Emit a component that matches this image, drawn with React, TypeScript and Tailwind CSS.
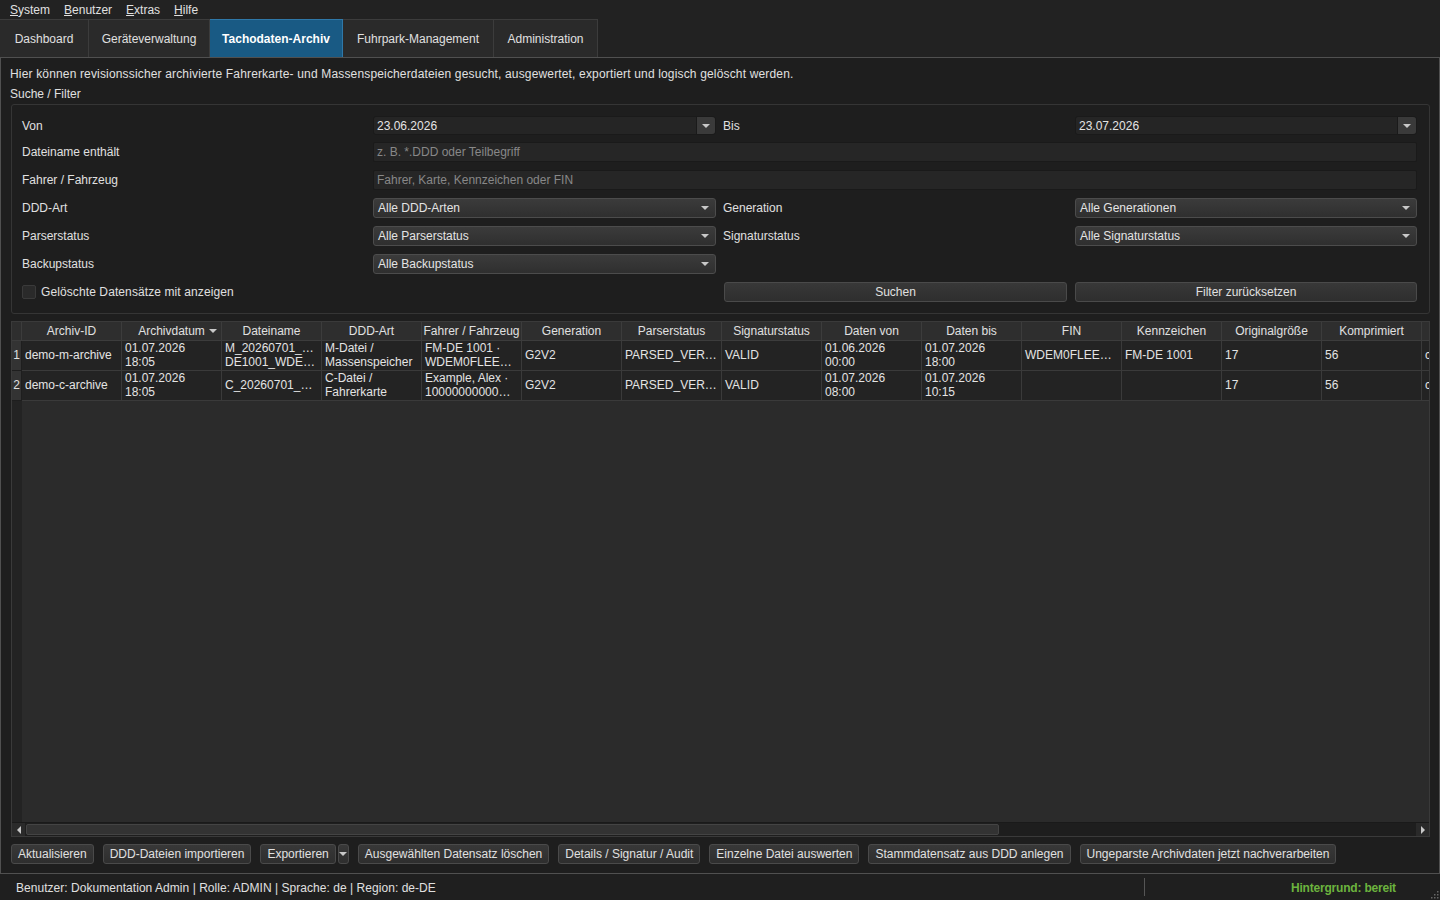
import type { ReactNode } from 'react';

const font = "font-['Liberation_Sans',Arial,sans-serif]";

const tabs = [
  { label: 'Dashboard', w: 'w-[89px]' },
  { label: 'Geräteverwaltung', w: 'w-[121px]' },
  { label: 'Tachodaten-Archiv', w: 'w-[133px]', active: true },
  { label: 'Fuhrpark-Management', w: 'w-[151px]' },
  { label: 'Administration', w: 'w-[104px]' },
];

const columns = [
  'Archiv-ID',
  'Archivdatum',
  'Dateiname',
  'DDD-Art',
  'Fahrer / Fahrzeug',
  'Generation',
  'Parserstatus',
  'Signaturstatus',
  'Daten von',
  'Daten bis',
  'FIN',
  'Kennzeichen',
  'Originalgröße',
  'Komprimiert',
  '',
];

const rows: string[][] = [
  [
    'demo-m-archive',
    '01.07.2026\n18:05',
    'M_20260701_…\nDE1001_WDE…',
    'M-Datei /\nMassenspeicher',
    'FM-DE 1001 ·\nWDEM0FLEE…',
    'G2V2',
    'PARSED_VER…',
    'VALID',
    '01.06.2026\n00:00',
    '01.07.2026\n18:00',
    'WDEM0FLEE…',
    'FM-DE 1001',
    '17',
    '56',
    'c…',
  ],
  [
    'demo-c-archive',
    '01.07.2026\n18:05',
    'C_20260701_…',
    'C-Datei /\nFahrerkarte',
    'Example, Alex ·\n10000000000…',
    'G2V2',
    'PARSED_VER…',
    'VALID',
    '01.07.2026\n08:00',
    '01.07.2026\n10:15',
    '',
    '',
    '17',
    '56',
    'c…',
  ],
];

const actions = [
  'Aktualisieren',
  'DDD-Dateien importieren',
  'Exportieren',
  'Ausgewählten Datensatz löschen',
  'Details / Signatur / Audit',
  'Einzelne Datei auswerten',
  'Stammdatensatz aus DDD anlegen',
  'Ungeparste Archivdaten jetzt nachverarbeiten',
];

function Arrow({ className = '' }: { className?: string }) {
  return (
    <svg viewBox="0 0 8 4" className={`h-[4px] w-[8px] ${className}`}>
      <path d="M0 0h8L4 4z" fill="#c8c8c8" />
    </svg>
  );
}

function Combo({ value }: { value: string }) {
  return (
    <div className="flex h-[20px] items-center justify-between rounded-[3px] border border-[#4c4c4c] bg-gradient-to-b from-[#3b3b3b] to-[#2f2f2f] pl-[4px] pr-[6px] text-[#e4e4e4]">
      <span>{value}</span>
      <Arrow />
    </div>
  );
}

function DateField({ value }: { value: string }) {
  return (
    <div className="flex h-[19px] items-stretch rounded-[3px] border border-[#1a1a1a] bg-[#252525]">
      <span className="flex flex-1 items-center pl-[3px] text-[#e4e4e4]">{value}</span>
      <span className="flex w-[19px] items-center justify-center rounded-r-[3px] border-l border-[#1a1a1a] bg-[#3a3a3a]">
        <Arrow />
      </span>
    </div>
  );
}

function TextField({ placeholder }: { placeholder: string }) {
  return (
    <div className="col-span-3 flex h-[20px] items-center rounded-[2px] border border-[#1a1a1a] bg-[#262626] pl-[3px] text-[#888]">
      {placeholder}
    </div>
  );
}

function Btn({ children, className = '' }: { children: ReactNode; className?: string }) {
  return (
    <button className={`h-[20px] rounded-[3px] border border-[#4a4a4a] bg-gradient-to-b from-[#383838] to-[#2e2e2e] px-[6px] text-[#e0e0e0] ${className}`}>
      {children}
    </button>
  );
}

function Label({ children }: { children: ReactNode }) {
  return <span className="flex items-center text-[#e0e0e0]">{children}</span>;
}

function FilterBox() {
  const grid = 'grid grid-cols-[344px_343px_345px_342px] gap-x-[7px]';
  return (
    <div className="mt-[2px] flex flex-col gap-[8px] rounded-[3px] border border-[#353535] px-[10px] pb-[11px] pt-[11px]">
      <div className={`${grid} -mb-[1px] h-[19px]`}>
        <Label>Von</Label>
        <DateField value="23.06.2026" />
        <Label>Bis</Label>
        <DateField value="23.07.2026" />
      </div>
      <div className={`${grid} h-[20px]`}>
        <Label>Dateiname enthält</Label>
        <TextField placeholder="z. B. *.DDD oder Teilbegriff" />
      </div>
      <div className={`${grid} h-[20px]`}>
        <Label>Fahrer / Fahrzeug</Label>
        <TextField placeholder="Fahrer, Karte, Kennzeichen oder FIN" />
      </div>
      <div className={`${grid} h-[20px]`}>
        <Label>DDD-Art</Label>
        <Combo value="Alle DDD-Arten" />
        <Label>Generation</Label>
        <Combo value="Alle Generationen" />
      </div>
      <div className={`${grid} h-[20px]`}>
        <Label>Parserstatus</Label>
        <Combo value="Alle Parserstatus" />
        <Label>Signaturstatus</Label>
        <Combo value="Alle Signaturstatus" />
      </div>
      <div className={`${grid} h-[20px]`}>
        <Label>Backupstatus</Label>
        <Combo value="Alle Backupstatus" />
      </div>
      <div className={`${grid} h-[20px]`}>
        <div className="col-span-2 flex items-center gap-[5px]">
          <span className="h-[14px] w-[14px] rounded-[2px] border border-[#3a3a3a] bg-[#2a2a2a]" />
          <span className="tracking-[0.1px] text-[#e0e0e0]">Gelöschte Datensätze mit anzeigen</span>
        </div>
        <Btn className="ml-[1px] w-[343px]">Suchen</Btn>
        <Btn>Filter zurücksetzen</Btn>
      </div>
    </div>
  );
}

function ArchiveTable() {
  return (
    <div className="mt-[7px] flex h-[516px] flex-col border border-[#3a3a3a] bg-[#2b2b2b]">
      <div className="flex min-h-0 flex-1">
        <div className="flex w-[10px] shrink-0 flex-col bg-[#232323]">
          <div className="h-[19px] border-b border-r border-[#3c3c3c] bg-[#2e2e2e]" />
          {rows.map((_, i) => (
            <div
              key={i}
              className="flex h-[30px] items-center justify-center border-b border-r border-[#1e1e1e] bg-[#333] pb-[2px] text-[#e0e0e0]"
            >
              {i + 1}
            </div>
          ))}
        </div>
        <div className="min-w-0 flex-1 overflow-hidden">
          <div className="flex h-[19px] bg-[#2e2e2e]">
            {columns.map((c, i) => (
              <div
                key={i}
                className="relative flex w-[100px] shrink-0 items-center justify-center border-b border-r border-[#3c3c3c] text-[#e0e0e0]"
              >
                {c}
                {i === 1 && <Arrow className="absolute right-[4px]" />}
              </div>
            ))}
          </div>
          {rows.map((r, ri) => (
            <div key={ri} className="flex h-[30px] bg-[#232323]">
              {r.map((cell, ci) => (
                <div
                  key={ci}
                  className="flex w-[100px] shrink-0 items-center overflow-hidden whitespace-pre border-b border-r border-[#3a3a3a] px-[3px] pb-[2px] leading-[14px] text-[#e4e4e4]"
                >
                  {cell}
                </div>
              ))}
            </div>
          ))}
        </div>
      </div>
      <div className="flex h-[14px] items-stretch border-t border-[#1a1a1a] bg-[#1e1e1e]">
        <span className="flex w-[13px] items-center justify-center bg-[#2a2a2a]">
          <svg viewBox="0 0 4 8" className="h-[8px] w-[4px]">
            <path d="M4 0v8L0 4z" fill="#c8c8c8" />
          </svg>
        </span>
        <span className="my-[1px] ml-[1px] w-[973px] rounded-[2px] border border-[#444] bg-[#333]" />
        <span className="flex-1" />
        <span className="flex w-[13px] items-center justify-center bg-[#2a2a2a]">
          <svg viewBox="0 0 4 8" className="h-[8px] w-[4px]">
            <path d="M0 0v8L4 4z" fill="#c8c8c8" />
          </svg>
        </span>
      </div>
    </div>
  );
}

export default function App() {
  return (
    <div className={`${font} flex h-[900px] w-[1440px] flex-col overflow-hidden bg-[#1f1f1f] text-[12px] text-[#e0e0e0]`}>
      <div className="flex h-[19px] items-center gap-[14px] bg-[#222] pl-[10px]">
        <span><u>S</u>ystem</span>
        <span><u>B</u>enutzer</span>
        <span><u>E</u>xtras</span>
        <span><u>H</u>ilfe</span>
      </div>
      <div className="flex h-[38px] bg-[#222]">
        {tabs.map((t) => (
          <div
            key={t.label}
            className={`flex ${t.w} items-center justify-center border-r border-t ${
              t.active
                ? 'border-[#2f78a8] bg-[#195a84] font-bold text-white'
                : 'border-[#3c3c3c] bg-[#2a2a2a] text-[#e0e0e0]'
            }`}
          >
            {t.label}
          </div>
        ))}
      </div>
      <div className="flex h-[817px] flex-col border-x border-b border-t border-[#505050] bg-[#1e1e1e] px-[9px] pt-[8px]">
        <p className="leading-[16px] tracking-[0.16px]">
          Hier können revisionssicher archivierte Fahrerkarte- und Massenspeicherdateien gesucht, ausgewertet, exportiert und logisch gelöscht werden.
        </p>
        <p className="mt-[4px] leading-[16px]">Suche / Filter</p>
        <div className="pl-[1px]">
          <FilterBox />
          <ArchiveTable />
          <div className="mt-[6px] flex h-[22px] items-center gap-[9px]">
            {actions.map((a) =>
              a === 'Exportieren' ? (
                <div key={a} className="flex gap-[2px]">
                  <Btn>{a}</Btn>
                  <Btn className="flex w-[11px] items-center justify-center !px-0">
                    <Arrow className="w-[6px]" />
                  </Btn>
                </div>
              ) : (
                <Btn key={a}>{a}</Btn>
              )
            )}
          </div>
        </div>
      </div>
      <div className="relative flex flex-1 items-center bg-[#1f1f1f] pl-[16px] pt-[1px]">
        <span className="tracking-[0.04px]">Benutzer: Dokumentation Admin | Rolle: ADMIN | Sprache: de | Region: de-DE</span>
        <span className="absolute left-[1144px] top-[4px] h-[18px] w-px bg-[#555]" />
        <span className="absolute left-[1291px] font-bold tracking-[-0.2px] text-[#6cb33e]">Hintergrund: bereit</span>
        <svg viewBox="0 0 10 10" className="absolute bottom-[1px] right-[1px] h-[10px] w-[10px]">
          {[
            [8, 2],
            [5, 5],
            [8, 5],
            [2, 8],
            [5, 8],
            [8, 8],
          ].map(([x, y]) => (
            <rect key={`${x}-${y}`} x={x} y={y} width="1.5" height="1.5" fill="#666" />
          ))}
        </svg>
      </div>
    </div>
  );
}
